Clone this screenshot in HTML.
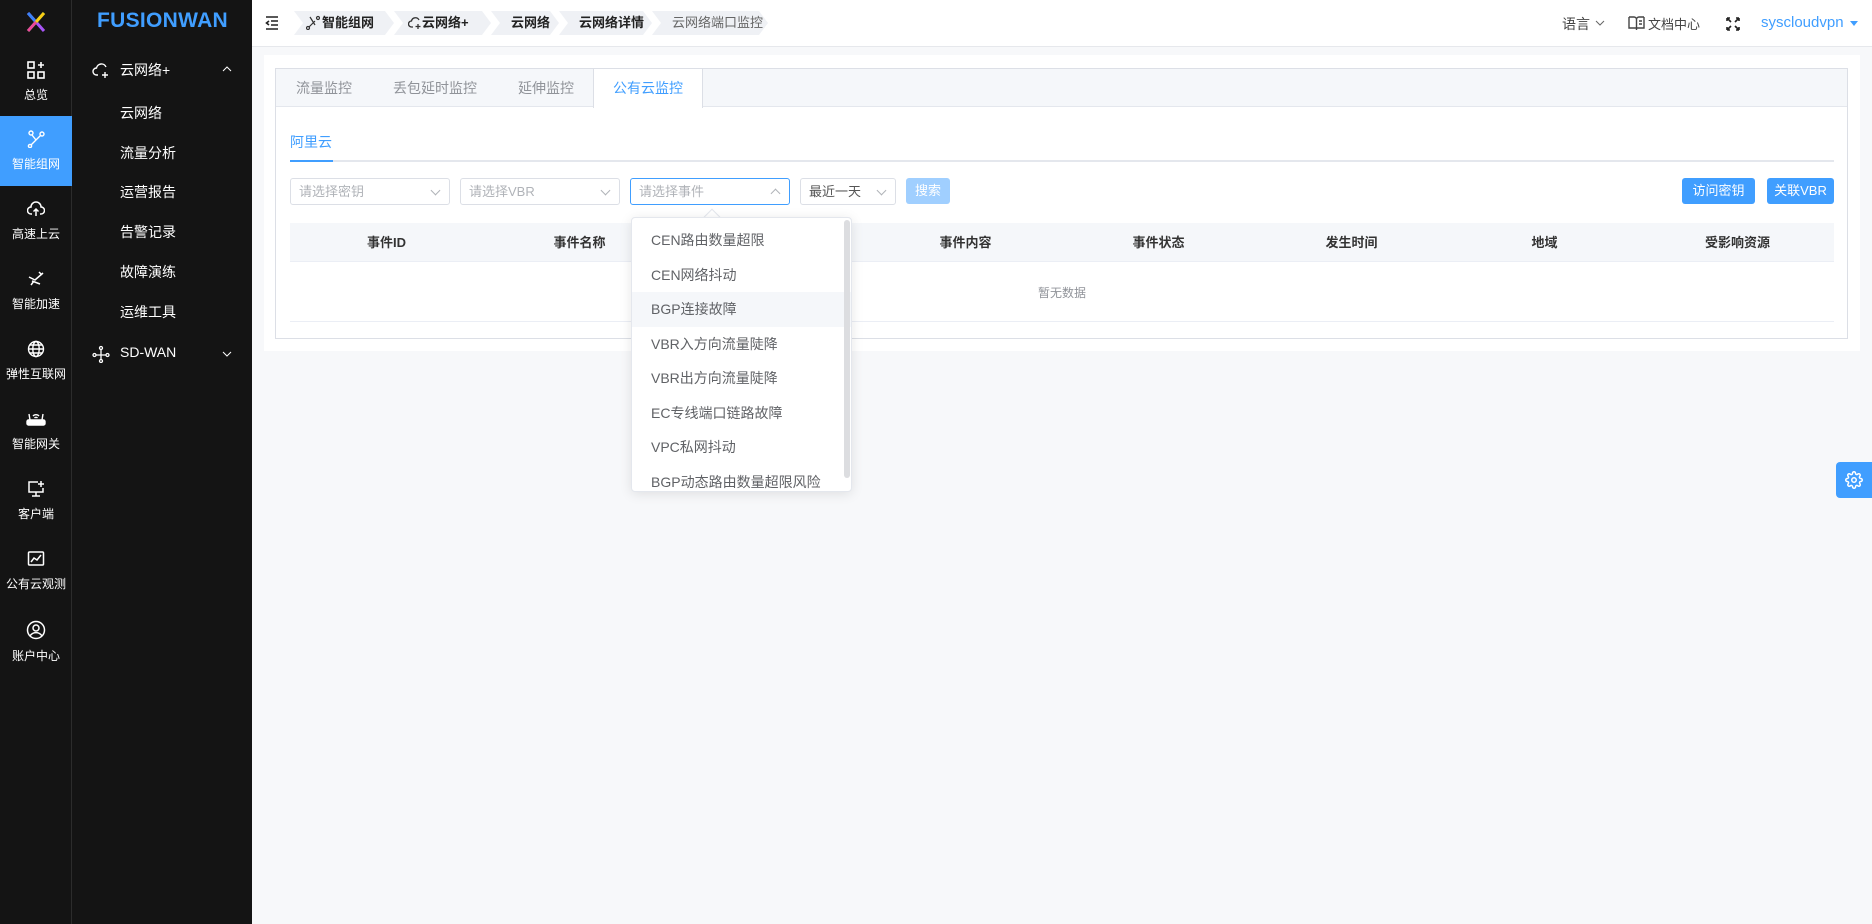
<!DOCTYPE html>
<html><head><meta charset="utf-8"><style>
*{box-sizing:border-box;margin:0;padding:0}
body{width:1872px;height:924px;overflow:hidden;font-family:"Liberation Sans","Noto Sans CJK SC",sans-serif;background:#f7f8fa;position:relative;color:#303133}
.abs{position:absolute}
#side1{left:0;top:0;width:72px;height:924px;background:#141414;border-right:1px solid #2c2c2c}
#side2{left:72px;top:0;width:180px;height:924px;background:#141414}
.si{position:absolute;left:0;width:72px;height:70px;text-align:center;color:#fff;font-size:12px}
.si svg{display:block;margin:14px auto 7px}
.si.act{background:#409eff}
.m2{position:absolute;left:120px;color:#fff;font-size:14px}
#hdr{left:252px;top:0;width:1620px;height:47px;background:#fff;border-bottom:1px solid #e6e8ec}
.bc{position:absolute;top:11px;height:24px;background:#eff1f5;font-size:13px;font-weight:bold;color:#222;line-height:24px;padding-left:20px;clip-path:polygon(0 0,calc(100% - 9px) 0,100% 50%,calc(100% - 9px) 100%,0 100%,9px 50%)}
#panel{left:264px;top:55px;width:1596px;height:296px;background:#fff}
#card{left:275px;top:68px;width:1573px;height:271px;border:1px solid #dcdfe6;background:#fff}
#tabs{left:0;top:0;width:1571px;height:38px;background:#f5f7fa;border-bottom:1px solid #e4e7ed}
.tab{position:absolute;top:0;height:38px;line-height:38px;font-size:14px;color:#909399}
.sel{position:absolute;top:178px;height:27px;border:1px solid #dcdfe6;border-radius:3px;background:#fff;font-size:13px;color:#b0b3b8;line-height:25px;padding-left:8px}
.sel i{position:absolute;right:10px;top:8px;width:7px;height:7px;border-right:1px solid #b0b3b8;border-bottom:1px solid #b0b3b8;transform:rotate(45deg)}
.btn{position:absolute;top:178px;height:26px;border-radius:3px;background:#409eff;color:#fff;font-size:13px;line-height:26px;text-align:center}
.th{position:absolute;top:223px;height:39px;line-height:39px;font-size:13px;font-weight:bold;color:#333;text-align:center;width:193px}
.dd{position:absolute;left:0;width:221px;height:34.5px;line-height:34.5px;padding-left:19px;font-size:14px;color:#606266}
</style></head><body>
<div id="side1" class="abs">
 <svg class="abs" style="left:24px;top:10px" width="24" height="24" viewBox="0 0 24 24"><path d="M4 3 L20 21" stroke="#a855f7" stroke-width="3"/><path d="M20 3 L4 21" stroke="#22c55e" stroke-width="3"/><path d="M4 3 L12 12" stroke="#3b82f6" stroke-width="3"/><path d="M20 3 L12 12" stroke="#facc15" stroke-width="3"/><path d="M4 21 L12 12" stroke="#ec4899" stroke-width="3"/></svg>
 <div class="si" style="top:47px"><svg width="18" height="18" viewBox="0 0 18 18" fill="none" stroke="#fff" stroke-width="1.6"><rect x="1" y="1" width="6" height="6"/><rect x="1" y="11" width="6" height="6"/><rect x="11" y="11" width="6" height="6"/><path d="M14 1v6M11 4h6"/></svg>总览</div>
 <div class="si act" style="top:116px"><svg width="18" height="18" viewBox="0 0 18 18" fill="none" stroke="#fff" stroke-width="1.4"><circle cx="4" cy="3" r="2"/><circle cx="15" cy="4" r="2"/><circle cx="3" cy="16" r="1.6"/><path d="M5 5l4 5 5-5M9 10l-5 5"/></svg>智能组网</div>
 <div class="si" style="top:186px"><svg width="18" height="18" viewBox="0 0 18 18" fill="none" stroke="#fff" stroke-width="1.5"><path d="M5 14H4a3.5 3.5 0 0 1 0-7 5 5 0 0 1 10 0 3.5 3.5 0 0 1 0 7h-1"/><path d="M9 16V9M6.5 11.5L9 9l2.5 2.5"/></svg>高速上云</div>
 <div class="si" style="top:256px"><svg width="18" height="18" viewBox="0 0 18 18" fill="none" stroke="#fff" stroke-width="1.5"><path d="M2 7l6 3 8-7M5 11l8 3M12 2l3 3M4 15l3-4"/></svg>智能加速</div>
 <div class="si" style="top:326px"><svg width="18" height="18" viewBox="0 0 18 18" fill="none" stroke="#fff" stroke-width="1.4"><circle cx="9" cy="9" r="7.5"/><ellipse cx="9" cy="9" rx="3.2" ry="7.5"/><path d="M1.5 9h15M3 5h12M3 13h12"/></svg>弹性互联网</div>
 <div class="si" style="top:396px"><svg width="20" height="18" viewBox="0 0 20 18" fill="none" stroke="#fff" stroke-width="1.4"><rect x="1" y="10" width="18" height="5" rx="1.5" fill="#fff"/><path d="M4 10L3 4M16 10l1-6M7 6a4 4 0 0 1 6 0M8.5 8a2 2 0 0 1 3 0"/></svg>智能网关</div>
 <div class="si" style="top:466px"><svg width="18" height="18" viewBox="0 0 18 18" fill="none" stroke="#fff" stroke-width="1.5"><path d="M11 2H2v10h14V8M9 12v4M5 16h8M14 1v6M11 4h6"/></svg>客户端</div>
 <div class="si" style="top:536px"><svg width="18" height="18" viewBox="0 0 18 18" fill="none" stroke="#fff" stroke-width="1.5"><rect x="1.5" y="2" width="15" height="13" rx="1"/><path d="M4 12l3-4 3 2 4-5"/></svg>公有云观测</div>
 <div class="si" style="top:606px"><svg width="20" height="20" viewBox="0 0 20 20" fill="none" stroke="#fff" stroke-width="1.5"><circle cx="10" cy="10" r="8.5"/><circle cx="10" cy="8" r="3"/><path d="M4 16a7 7 0 0 1 12 0"/></svg>账户中心</div>
</div>
<div id="side2" class="abs">
 <div class="abs" style="left:25px;top:9px;font-size:21px;font-weight:bold;color:#409eff;letter-spacing:0.3px">FUSIONWAN</div>
 <svg class="abs" style="left:20px;top:61px" width="18" height="18" viewBox="0 0 18 18" fill="none" stroke="#fff" stroke-width="1.4"><path d="M6 14H4.5a3.5 3.5 0 0 1 0-7 5 5 0 0 1 9.5-1M13 11v6M10 14h6"/></svg>
 <div class="m2" style="left:48px;top:60px">云网络+</div>
 <svg class="abs" style="left:150px;top:66px" width="10" height="6"><path d="M1 5l4-4 4 4" stroke="#fff" fill="none"/></svg>
 <div class="m2" style="left:48px;top:103px">云网络</div>
 <div class="m2" style="left:48px;top:143px">流量分析</div>
 <div class="m2" style="left:48px;top:182px">运营报告</div>
 <div class="m2" style="left:48px;top:222px">告警记录</div>
 <div class="m2" style="left:48px;top:262px">故障演练</div>
 <div class="m2" style="left:48px;top:302px">运维工具</div>
 <svg class="abs" style="left:20px;top:345px" width="18" height="18" viewBox="0 0 18 18" fill="none" stroke="#fff" stroke-width="1.3"><circle cx="9" cy="3" r="1.5"/><circle cx="2.5" cy="10" r="1.5"/><circle cx="15.5" cy="10" r="1.5"/><circle cx="9" cy="16" r="1.5"/><path d="M9 4.5v10M4 10h10"/></svg>
 <div class="m2" style="left:48px;top:344px">SD-WAN</div>
 <svg class="abs" style="left:150px;top:351px" width="10" height="6"><path d="M1 1l4 4 4-4" stroke="#fff" fill="none"/></svg>
</div>
<div id="hdr" class="abs">
 <svg class="abs" style="left:13px;top:16px" width="14" height="14" viewBox="0 0 14 14" fill="none" stroke="#222" stroke-width="1.6"><path d="M1 1h12M6 5h7M6 9h7M1 13h12M4 5L1.5 7 4 9"/></svg>
 <div class="bc" style="left:42px;width:100px;padding-left:22px"><svg style="position:absolute;left:12px;top:4px" width="14" height="15" viewBox="0 0 14 15" fill="none" stroke="#333" stroke-width="1.2"><circle cx="2" cy="13" r="1.5"/><circle cx="12" cy="3" r="1.5"/><path d="M3 12l6-6M4 2l5 8"/></svg><span style="margin-left:6px">智能组网</span></div>
 <div class="bc" style="left:142px;width:97px;padding-left:28px"><svg style="position:absolute;left:14px;top:5px" width="14" height="14" viewBox="0 0 14 14" fill="none" stroke="#333" stroke-width="1.3"><path d="M5 11H3.5a3 3 0 0 1 0-6 4 4 0 0 1 7.5-1M10 8v5M7.5 10.5h5"/></svg>云网络+</div>
 <div class="bc" style="left:239px;width:68px">云网络</div>
 <div class="bc" style="left:307px;width:93px">云网络详情</div>
 <div class="bc" style="left:400px;width:116px;font-weight:normal;color:#666">云网络端口监控</div>
 <div class="abs" style="left:1310px;top:14px;font-size:14px;color:#444">语言</div>
 <svg class="abs" style="left:1343px;top:20px" width="10" height="6"><path d="M1 1l4 4 4-4" stroke="#666" fill="none"/></svg>
 <svg class="abs" style="left:1376px;top:15px" width="17" height="16" viewBox="0 0 17 16" fill="none" stroke="#444" stroke-width="1.4"><path d="M1 2h5a2.5 2.5 0 0 1 2.5 2.5V15 M16 2h-5a2.5 2.5 0 0 0-2.5 2.5M1 2v11h7M16 2v11h-7M11 6h3M11 9h3"/></svg>
 <div class="abs" style="left:1396px;top:14px;font-size:13px;color:#444">文档中心</div>
 <svg class="abs" style="left:1474px;top:17px" width="14" height="14" viewBox="0 0 14 14" fill="none" stroke="#222" stroke-width="1.6"><path d="M1 1l4 4M1 1v3M1 1h3M13 1L9 5M13 1v3M13 1h-3M1 13l4-4M1 13v-3M1 13h3M13 13L9 9M13 13v-3M13 13h-3"/></svg>
 <div class="abs" style="left:1509px;top:14px;font-size:15px;color:#409eff">syscloudvpn</div>
 <div class="abs" style="left:1598px;top:21px;width:0;height:0;border-left:4px solid transparent;border-right:4px solid transparent;border-top:5px solid #409eff"></div>
</div>
<div id="panel" class="abs"></div>
<div id="card" class="abs">
 <div id="tabs" class="abs">
  <div class="tab" style="left:20px">流量监控</div>
  <div class="tab" style="left:117px">丢包延时监控</div>
  <div class="tab" style="left:242px">延伸监控</div>
  <div class="tab" style="left:317px;width:110px;height:39px;background:#fff;border-left:1px solid #dcdfe6;border-right:1px solid #dcdfe6;text-align:center;color:#409eff">公有云监控</div>
 </div>
</div>
<div class="abs" style="left:290px;top:132px;font-size:14px;color:#409eff">阿里云</div>
<div class="abs" style="left:290px;top:160px;width:1544px;height:2px;background:#e4e7ed"></div>
<div class="abs" style="left:290px;top:160px;width:43px;height:2px;background:#409eff"></div>
<div class="sel" style="left:290px;width:160px">请选择密钥<i></i></div>
<div class="sel" style="left:460px;width:160px">请选择VBR<i></i></div>
<div class="sel" style="left:630px;width:160px;border-color:#409eff">请选择事件<i style="transform:rotate(225deg);top:11px"></i></div>
<div class="sel" style="left:800px;width:96px;color:#555">最近一天<i></i></div>
<div class="btn" style="left:906px;width:44px;background:#a0cfff">搜索</div>
<div class="btn" style="left:1682px;width:73px">访问密钥</div>
<div class="btn" style="left:1767px;width:67px">关联VBR</div>
<div class="abs" style="left:290px;top:223px;width:1544px;height:39px;background:#f5f7fa;border-bottom:1px solid #ebeef5"></div>
<div class="th" style="left:290px">事件ID</div>
<div class="th" style="left:483px">事件名称</div>
<div class="th" style="left:676px">事件类型</div>
<div class="th" style="left:869px">事件内容</div>
<div class="th" style="left:1062px">事件状态</div>
<div class="th" style="left:1255px">发生时间</div>
<div class="th" style="left:1448px">地域</div>
<div class="th" style="left:1641px">受影响资源</div>
<div class="abs" style="left:290px;top:321px;width:1544px;height:1px;background:#ebeef5"></div>
<div class="abs" style="left:1000px;top:284px;width:124px;text-align:center;font-size:12px;color:#909399">暂无数据</div>
<div class="abs" style="left:706px;top:211px;width:12px;height:12px;background:#fff;transform:rotate(45deg);border-left:1px solid #e4e7ed;border-top:1px solid #e4e7ed"></div>
<div class="abs" style="left:631px;top:217px;width:221px;height:275px;background:#fff;border:1px solid #e4e7ed;border-radius:4px;box-shadow:0 2px 12px rgba(0,0,0,.1);overflow:hidden">
 <div class="dd" style="top:5px">CEN路由数量超限</div>
 <div class="dd" style="top:39.5px">CEN网络抖动</div>
 <div class="dd" style="top:74px;background:#f5f7fa">BGP连接故障</div>
 <div class="dd" style="top:108.5px">VBR入方向流量陡降</div>
 <div class="dd" style="top:143px">VBR出方向流量陡降</div>
 <div class="dd" style="top:177.5px">EC专线端口链路故障</div>
 <div class="dd" style="top:212px">VPC私网抖动</div>
 <div class="dd" style="top:246.5px">BGP动态路由数量超限风险</div>
 <div class="abs" style="left:212px;top:2px;width:6px;height:258px;border-radius:3px;background:#dcdde0"></div>
</div>
<div class="abs" style="left:1836px;top:462px;width:36px;height:36px;background:#409eff;border-radius:4px 0 0 4px"></div>
<svg class="abs" style="left:1845px;top:471px" width="18" height="18" viewBox="0 0 24 24" fill="none" stroke="#fff" stroke-width="2"><circle cx="12" cy="12" r="3"/><path d="M19.4 15a1.65 1.65 0 0 0 .33 1.820l.06.06a2 2 0 1 1-2.83 2.830l-.06-.06a1.650 1.650 0 0 0-1.820-.330 1.650 1.650 0 0 0-1 1.510V21a2 2 0 1 1-4 0v-.09A1.650 1.650 0 0 0 9 19.400a1.650 1.650 0 0 0-1.820.330l-.06.06a2 2 0 1 1-2.830-2.830l.06-.06A1.650 1.650 0 0 0 4.680 15a1.650 1.650 0 0 0-1.510-1H3a2 2 0 1 1 0-4h.09A1.650 1.650 0 0 0 4.600 9a1.650 1.650 0 0 0-.330-1.820l-.06-.06a2 2 0 1 1 2.830-2.830l.06.06A1.650 1.650 0 0 0 9 4.680 1.650 1.650 0 0 0 10 3.170V3a2 2 0 1 1 4 0v.09a1.650 1.650 0 0 0 1 1.510 1.650 1.650 0 0 0 1.820-.330l.06-.06a2 2 0 1 1 2.830 2.830l-.06.06A1.650 1.650 0 0 0 19.400 9a1.650 1.650 0 0 0 1.510 1H21a2 2 0 1 1 0 4h-.09a1.650 1.650 0 0 0-1.510 1z"/></svg>
</body></html>
